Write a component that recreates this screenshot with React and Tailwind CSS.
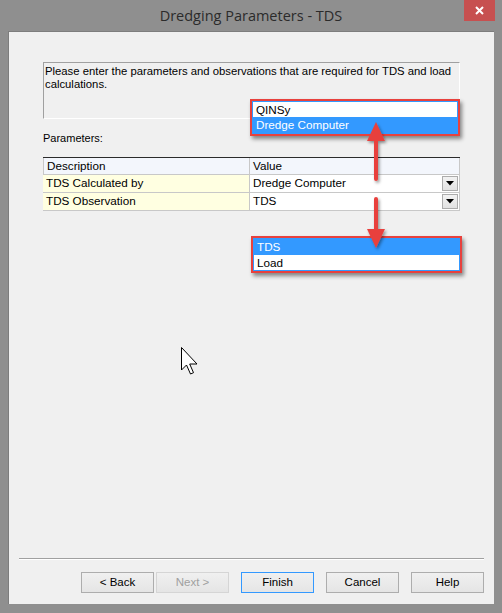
import React from 'react';

function ComboArrow() {
  return (
    <div className="absolute right-[1px] top-[1px] bottom-[1px] w-[16px] border border-[#acacac] bg-gradient-to-b from-[#f2f2f2] to-[#e2e2e2] flex items-center justify-center">
      <svg width="8" height="5" viewBox="0 0 8 5">
        <path d="M0 0 H8 L4 4.5 Z" fill="#000" />
      </svg>
    </div>
  );
}

function Btn({ children, variant }) {
  const border =
    variant === 'default'
      ? 'border-[#3399ff]'
      : variant === 'disabled'
      ? 'border-[#d5d5d5] text-[#a0a0a0]'
      : 'border-[#adadad]';
  return (
    <div
      className={`w-[73px] h-[21px] border ${border} bg-gradient-to-b from-[#f0f0f0] to-[#e5e5e5] flex items-center justify-center text-[11.5px]`}
    >
      {children}
    </div>
  );
}

export default function App() {
  return (
    <div
      className="w-[502px] h-[613px] bg-[#8f8f8f] flex flex-col text-black"
      style={{ fontFamily: '"Liberation Sans", Arial, sans-serif' }}
    >
      {/* Title bar */}
      <div className="h-[31px] flex items-start">
        <div
          className="flex-1 text-center text-[14.5px] text-[#2b2b2b] pt-[5px] pl-[38px]"
          style={{ fontFamily: '"Open Sans", "Noto Sans", sans-serif' }}
        >
          Dredging Parameters - TDS
        </div>
        <div className="w-[31px] h-[21px] bg-[#c75050] mr-[7px] flex items-center justify-center">
          <svg width="9" height="9" viewBox="0 0 9 9">
            <path d="M1 1 L8 8 M8 1 L1 8" stroke="#fff" strokeWidth="2" />
          </svg>
        </div>
      </div>

      {/* Client area */}
      <div className="relative mx-[8px] mb-[9px] flex-1 bg-[#f0f0f0] border-t border-l border-[#7d7d7d] flex flex-col">
        <div className="pl-[34px] pr-[34px] pt-[30px]">
          <div className="h-[57px] border-t border-l border-[#a0a0a0] border-b border-r border-b-white border-r-white text-[11.3px] leading-[13px] pl-[1px] pt-[2px]">
            Please enter the parameters and observations that are required for TDS and load calculations.
          </div>
          <div className="text-[11px] mt-[11px]">Parameters:</div>
          <div className="mt-[10px] border-t border-[#2b2b2b] text-[11.7px]">
            <div className="flex h-[17px] border-b border-[#c8c8c8]">
              <div className="w-[207px] bg-[#f3f6fc] border-l border-r border-[#c8c8c8] pl-[3px] flex items-center">Description</div>
              <div className="flex-1 bg-[#f3f6fc] border-r border-[#c8c8c8] pl-[3px] flex items-center">Value</div>
            </div>
            <div className="flex h-[18px] border-b border-[#c8c8c8]">
              <div className="w-[207px] bg-[#ffffe1] border-r border-[#c8c8c8] pl-[3px] flex items-center">TDS Calculated by</div>
              <div className="relative flex-1 bg-white border-r border-[#c8c8c8] pl-[3px] flex items-center">
                Dredge Computer
                <ComboArrow />
              </div>
            </div>
            <div className="flex h-[18px] border-b border-[#c8c8c8]">
              <div className="w-[207px] bg-[#ffffe1] border-r border-[#c8c8c8] pl-[3px] flex items-center">TDS Observation</div>
              <div className="relative flex-1 bg-white border-r border-[#c8c8c8] pl-[3px] flex items-center">
                TDS
                <ComboArrow />
              </div>
            </div>
          </div>
        </div>

        <div className="flex-1" />

        <div className="mx-[10px] border-t border-[#a0a0a0] border-b border-b-white" />
        <div className="flex justify-end gap-[12px] pr-[10px] pt-[12px] pb-[11px]">
          <div className="flex gap-[2px]">
            <Btn>&lt; Back</Btn>
            <Btn variant="disabled">Next &gt;</Btn>
          </div>
          <Btn variant="default">Finish</Btn>
          <Btn>Cancel</Btn>
          <Btn>Help</Btn>
        </div>

        {/* Annotation popups */}
        <div className="absolute left-[241px] top-[67px] w-[210px] border-2 border-[#e8413d] bg-white text-[11.7px] shadow-[2px_3px_4px_rgba(0,0,0,0.45)]">
          <div className="border border-[#3399ff]">
            <div className="h-[15px] pl-[3px] flex items-center">QINSy</div>
            <div className="h-[16px] pl-[3px] flex items-center bg-[#3399ff] text-white">Dredge Computer</div>
          </div>
        </div>
        <div className="absolute left-[242px] top-[204px] w-[211px] border-2 border-[#e8413d] bg-white text-[11.7px] shadow-[2px_3px_4px_rgba(0,0,0,0.45)]">
          <div className="border border-[#3399ff]">
            <div className="h-[16px] pl-[3px] flex items-center bg-[#3399ff] text-white">TDS</div>
            <div className="h-[15px] pl-[3px] flex items-center">Load</div>
          </div>
        </div>

        {/* Arrows */}
        <svg className="absolute left-0 top-0 pointer-events-none" width="486" height="573">
          <defs>
            <filter id="sh" x="-50%" y="-50%" width="200%" height="200%">
              <feDropShadow dx="1.5" dy="2" stdDeviation="1.5" floodColor="#000" floodOpacity="0.4" />
            </filter>
          </defs>
          <g filter="url(#sh)" fill="#e8413d" stroke="#e8413d">
            <path d="M367 147 V106" strokeWidth="4" strokeLinecap="round" />
            <path d="M358 109 L367 90 L376 109 Z" stroke="none" />
            <path d="M367 167 V200" strokeWidth="4" strokeLinecap="round" />
            <path d="M358 197 L367 216 L376 197 Z" stroke="none" />
          </g>
        </svg>

        {/* Mouse cursor */}
        <svg className="absolute left-[172px] top-[315px]" width="18" height="30" viewBox="0 0 18 30">
          <path
            d="M0.5 0.5 V23 L5.5 18 L9.5 27 L12.5 25.7 L8.7 17 H16 Z"
            fill="#fff"
            stroke="#000"
            strokeWidth="1"
            strokeLinejoin="miter"
          />
        </svg>
      </div>
    </div>
  );
}
